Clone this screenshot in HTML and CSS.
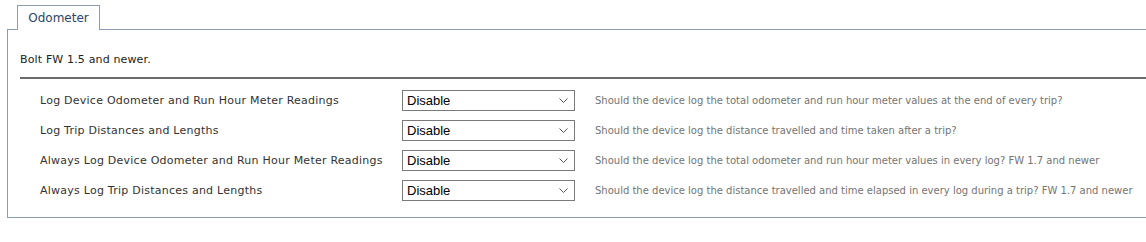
FILE: index.html
```html
<!DOCTYPE html>
<html>
<head>
<meta charset="utf-8">
<link rel="stylesheet" href="styles.css">
</head>
<body>
<div class="wrap">
  <div class="tabs">
    <div class="tab">Odometer</div>
  </div>
  <div class="panel">
    <div class="heading">Bolt FW 1.5 and newer.</div>
    <div class="sep"></div>
    <div class="rows">
      <div class="label">Log Device Odometer and Run Hour Meter Readings</div>
      <div class="select"><span>Disable</span><svg width="9" height="5" viewBox="0 0 9 5"><path d="M0.5 0.5 L4.5 4.5 L8.5 0.5" fill="none" stroke="#555" stroke-width="1"/></svg></div>
      <div class="desc">Should the device log the total odometer and run hour meter values at the end of every trip?</div>

      <div class="label">Log Trip Distances and Lengths</div>
      <div class="select"><span>Disable</span><svg width="9" height="5" viewBox="0 0 9 5"><path d="M0.5 0.5 L4.5 4.5 L8.5 0.5" fill="none" stroke="#555" stroke-width="1"/></svg></div>
      <div class="desc">Should the device log the distance travelled and time taken after a trip?</div>

      <div class="label">Always Log Device Odometer and Run Hour Meter Readings</div>
      <div class="select"><span>Disable</span><svg width="9" height="5" viewBox="0 0 9 5"><path d="M0.5 0.5 L4.5 4.5 L8.5 0.5" fill="none" stroke="#555" stroke-width="1"/></svg></div>
      <div class="desc">Should the device log the total odometer and run hour meter values in every log? FW 1.7 and newer</div>

      <div class="label">Always Log Trip Distances and Lengths</div>
      <div class="select"><span>Disable</span><svg width="9" height="5" viewBox="0 0 9 5"><path d="M0.5 0.5 L4.5 4.5 L8.5 0.5" fill="none" stroke="#555" stroke-width="1"/></svg></div>
      <div class="desc">Should the device log the distance travelled and time elapsed in every log during a trip? FW 1.7 and newer</div>
    </div>
  </div>
</div>
</body>
</html>
```
FILE: styles.css
```css
html, body {
  margin: 0;
  padding: 0;
  background: #fff;
  overflow: hidden;
}
body {
  font-family: "DejaVu Sans", Verdana, sans-serif;
  font-size: 11px;
  color: #333;
}
.wrap {
  padding: 5px 0 0 7px;
}
.tabs {
  display: flex;
  padding-left: 10px;
  height: 24px;
}
.tab {
  box-sizing: border-box;
  width: 83px;
  height: 25px;
  border: 1px solid #8d9cb3;
  border-bottom: none;
  background: #fff;
  color: #2b4466;
  font-size: 12px;
  line-height: 24px;
  text-align: center;
  position: relative;
  z-index: 1;
}
.panel {
  border: 1px solid #8d9cb3;
  border-right: none;
  padding: 0 0 12px 12px;
}
.heading {
  padding-top: 23px;
  line-height: 14px;
  color: #222;
  letter-spacing: 0.15px;
}
.sep {
  margin-top: 10px;
  height: 2px;
  background: #6b6b6b;
}
.rows {
  display: grid;
  grid-template-columns: 342px 173px auto;
  grid-auto-rows: 30px;
  column-gap: 20px;
  align-items: center;
  padding-left: 20px;
  margin-top: 6px;
}
.rows .label {
  white-space: nowrap;
  color: #333;
  letter-spacing: 0.24px;
}
.rows .select {
  box-sizing: border-box;
  height: 21px;
  border: 1px solid #7a7a7a;
  display: flex;
  align-items: center;
  justify-content: space-between;
  padding: 0 6px 0 4px;
  font-family: "Liberation Sans", Arial, sans-serif;
  font-size: 13px;
  color: #000;
  background: #fff;
}
.rows .desc {
  white-space: nowrap;
  font-size: 10px;
  color: #747474;
}
```
